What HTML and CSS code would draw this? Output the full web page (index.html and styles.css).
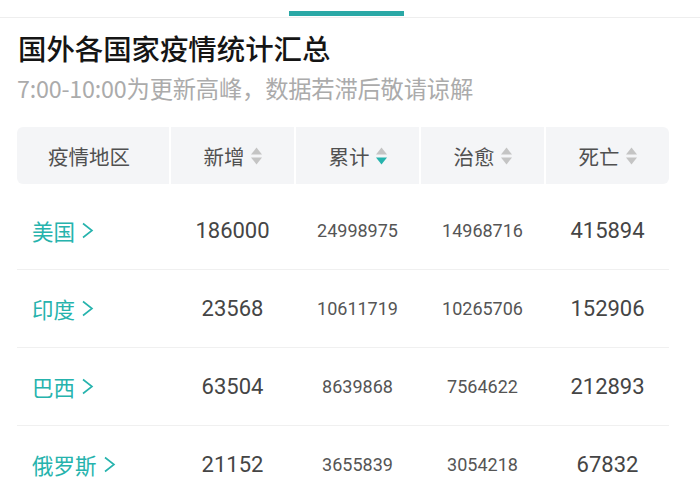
FILE: index.html
```html
<!DOCTYPE html>
<html lang="zh">
<head>
<meta charset="utf-8">
<link rel="stylesheet" href="styles.css">
</head>
<body>
<div class="tabbar"><div class="tab-indicator"></div></div>
<div class="content">
  <h1 class="title">国外各国家疫情统计汇总</h1>
  <p class="subtitle">7:00-10:00为更新高峰，数据若滞后敬请谅解</p>
  <div class="table">
    <div class="thead">
      <div class="th th-first">疫情地区</div>
      <div class="th">新增<svg class="sort" viewBox="0 0 11 18"><path d="M5.5 0.5 L11 7.5 L0 7.5 Z" fill="#c4c4c4"/><path d="M5.5 17.5 L11 10.5 L0 10.5 Z" fill="#c4c4c4"/></svg></div>
      <div class="th">累计<svg class="sort" viewBox="0 0 11 18"><path d="M5.5 0.5 L11 7.5 L0 7.5 Z" fill="#c4c4c4"/><path d="M5.5 17.5 L11 10.5 L0 10.5 Z" fill="#26b3ad"/></svg></div>
      <div class="th">治愈<svg class="sort" viewBox="0 0 11 18"><path d="M5.5 0.5 L11 7.5 L0 7.5 Z" fill="#c4c4c4"/><path d="M5.5 17.5 L11 10.5 L0 10.5 Z" fill="#c4c4c4"/></svg></div>
      <div class="th th-last">死亡<svg class="sort" viewBox="0 0 11 18"><path d="M5.5 0.5 L11 7.5 L0 7.5 Z" fill="#c4c4c4"/><path d="M5.5 17.5 L11 10.5 L0 10.5 Z" fill="#c4c4c4"/></svg></div>
    </div>
    <div class="tbody">
      <div class="row">
        <div class="country">美国<svg class="chev" viewBox="0 0 13 17"><path d="M2 1.5 L11 8.5 L2 15.5" fill="none" stroke="#26b3ad" stroke-width="1.6"/></svg></div>
        <div class="num big">186000</div>
        <div class="num small">24998975</div>
        <div class="num small">14968716</div>
        <div class="num big">415894</div>
      </div>
      <div class="row">
        <div class="country">印度<svg class="chev" viewBox="0 0 13 17"><path d="M2 1.5 L11 8.5 L2 15.5" fill="none" stroke="#26b3ad" stroke-width="1.6"/></svg></div>
        <div class="num big">23568</div>
        <div class="num small">10611719</div>
        <div class="num small">10265706</div>
        <div class="num big">152906</div>
      </div>
      <div class="row">
        <div class="country">巴西<svg class="chev" viewBox="0 0 13 17"><path d="M2 1.5 L11 8.5 L2 15.5" fill="none" stroke="#26b3ad" stroke-width="1.6"/></svg></div>
        <div class="num big">63504</div>
        <div class="num small">8639868</div>
        <div class="num small">7564622</div>
        <div class="num big">212893</div>
      </div>
      <div class="row">
        <div class="country">俄罗斯<svg class="chev" viewBox="0 0 13 17"><path d="M2 1.5 L11 8.5 L2 15.5" fill="none" stroke="#26b3ad" stroke-width="1.6"/></svg></div>
        <div class="num big">21152</div>
        <div class="num small">3655839</div>
        <div class="num small">3054218</div>
        <div class="num big">67832</div>
      </div>
    </div>
  </div>
</div>
</body>
</html>
```

FILE: styles.css
```css
* { box-sizing: border-box; }
html, body { margin: 0; padding: 0; background: #fff; }
body {
  width: 700px;
  height: 500px;
  overflow: hidden;
  font-family: "Noto Sans CJK SC", "Noto Sans", sans-serif;
}
.tabbar {
  height: 18px;
  border-bottom: 1px solid #eeeeee;
  padding: 11px 0 0 289px;
}
.tab-indicator {
  width: 115px;
  height: 5px;
  background: #2aa8a6;
}
.content {
  padding: 0 31px 0 17px;
}
.title {
  margin: 12px 0 0 1px;
  font-size: 28.4px;
  line-height: 36px;
  font-weight: 500;
  color: #151515;
}
.subtitle {
  margin: 7px 0 0 0;
  font-size: 23.3px;
  line-height: 30px;
  color: #ababab;
  font-weight: 400;
  letter-spacing: -0.2px;
}
.table {
  margin-top: 24px;
  width: 652px;
}
.thead {
  display: grid;
  grid-template-columns: 152px repeat(4, 1fr);
  column-gap: 2px;
  height: 57px;
}
.th {
  background: #f4f5f7;
  display: flex;
  align-items: center;
  justify-content: center;
  font-size: 20.5px;
  color: #505050;
  gap: 6px;
}
.th-first { border-radius: 6px 0 0 6px; padding-right: 8px; }
.th-last { border-radius: 0 6px 6px 0; }
.sort { width: 11px; height: 18px; }
.tbody { margin-top: 8px; }
.row {
  display: grid;
  grid-template-columns: 152px repeat(4, 1fr);
  column-gap: 2px;
  height: 78px;
  align-items: center;
  border-bottom: 1px solid #f0f0f0;
}
.country {
  padding-left: 15px;
  font-size: 21.5px;
  color: #26b3ad;
  display: flex;
  align-items: center;
  gap: 6px;
}
.chev { width: 13px; height: 17px; }
.num {
  text-align: center;
  font-family: Roboto, "Noto Sans", sans-serif;
  color: #454545;
}
.big { font-size: 22px; }
.small { font-size: 18px; color: #555; }
```
